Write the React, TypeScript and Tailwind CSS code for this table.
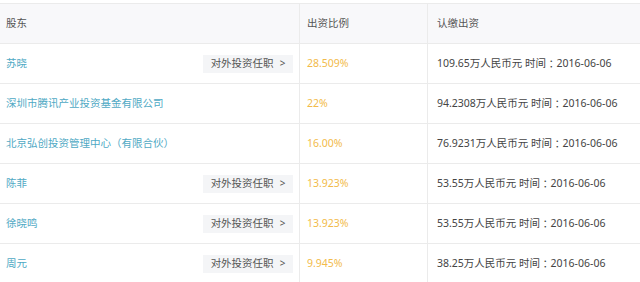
const rows = [
  { name: '苏晓', btn: true, pct: '28.509%', amount: '109.65' },
  { name: '深圳市腾讯产业投资基金有限公司', btn: false, pct: '22%', amount: '94.2308' },
  { name: '北京弘创投资管理中心（有限合伙）', btn: false, pct: '16.00%', amount: '76.9231' },
  { name: '陈菲', btn: true, pct: '13.923%', amount: '53.55' },
  { name: '徐晓鸣', btn: true, pct: '13.923%', amount: '53.55' },
  { name: '周元', btn: true, pct: '9.945%', amount: '38.25' },
];

export default function App() {
  return (
    <div
      className="w-[640px] h-[282px] overflow-hidden bg-white pt-[3px] text-[10.5px]"
      style={{ fontFamily: '"Noto Sans", "Noto Sans CJK SC", sans-serif' }}
    >
      <div className="grid grid-cols-[300px_128px_1fr] border-t border-[#ebebeb]">
        <div className="h-10 flex items-center pl-[6px] bg-[#f8f8fa] border-b border-r border-[#ebebeb] text-[#555]">股东</div>
        <div className="h-10 flex items-center pl-[7px] bg-[#f8f8fa] border-b border-r border-[#ebebeb] text-[#555]">出资比例</div>
        <div className="h-10 flex items-center pl-[9px] bg-[#f8f8fa] border-b border-[#ebebeb] text-[#555]">认缴出资</div>
        {rows.map((r) => (
          <div key={r.name} className="contents">
            <div className="h-10 flex items-center justify-between pl-[6px] pr-[6px] border-b border-r border-[#ebebeb]">
              <span className="text-[#4fa9c4]">{r.name}</span>
              {r.btn && (
                <span className="w-[90px] h-[18px] flex items-center justify-center gap-[6px] bg-[#f4f5f7] text-[#555]">
                  对外投资任职<span className="text-[10px]">&gt;</span>
                </span>
              )}
            </div>
            <div className="h-10 flex items-center pl-[7px] border-b border-r border-[#ebebeb] text-[#f2bb4a]">{r.pct}</div>
            <div className="h-10 flex items-center pl-[9px] border-b border-[#ebebeb] text-[#444]">
              {r.amount}万人民币元 时间<span className="font-['Noto_Sans_CJK_TC']">：</span>2016-06-06
            </div>
          </div>
        ))}
      </div>
    </div>
  );
}
